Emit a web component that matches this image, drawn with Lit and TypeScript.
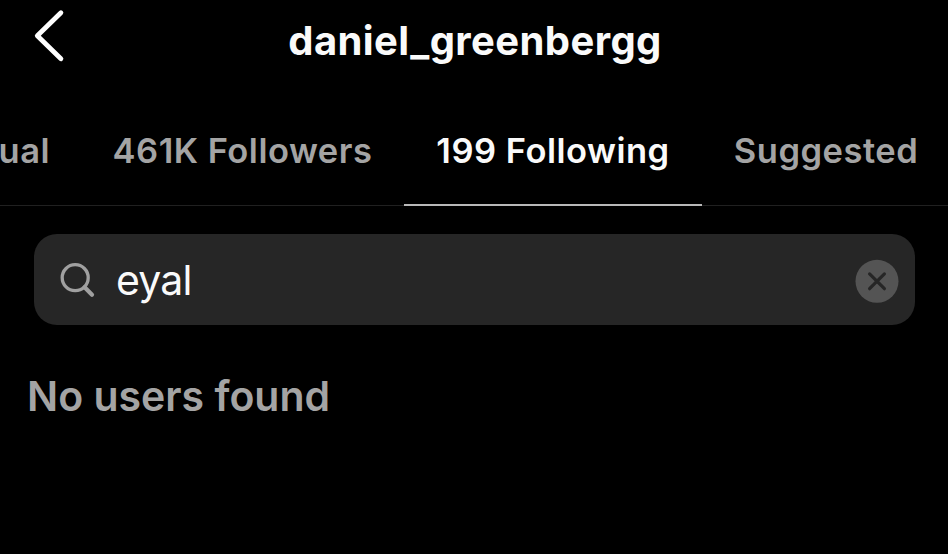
import { LitElement, html, css } from 'lit';
import { customElement, property, state } from 'lit/decorators.js';
import { classMap } from 'lit/directives/class-map.js';

interface Tab {
  id: string;
  label: string;
}

@customElement('app-root')
export class AppRoot extends LitElement {
  static styles = css`
    :host {
      display: block;
      width: 948px;
      height: 554px;
      overflow: hidden;
      background-color: #000;
      color: #fafafa;
      font-family: Inter, 'Liberation Sans', sans-serif;
    }

    * {
      box-sizing: border-box;
    }

    button {
      padding: 0;
      border: none;
      background-color: transparent;
      color: inherit;
      font: inherit;
      cursor: pointer;
    }

    svg {
      display: block;
    }

    .header {
      display: grid;
      grid-template-columns: 100px 1fr 98px;
      align-items: start;
      height: 84px;
    }

    .back {
      width: 32px;
      margin: 9px 0 0 33px;
    }

    h1 {
      margin: 16px 0 0;
      font-size: 40px;
      line-height: 50px;
      font-weight: 700;
      letter-spacing: 0.4px;
      text-align: center;
      white-space: nowrap;
    }

    .tabs {
      display: grid;
      grid-template-columns: 81px 323px 298px 248px;
      height: 122px;
      box-shadow: inset 0 -1px #202020;
    }

    .tab {
      display: flex;
      justify-content: center;
      padding-top: 46px;
      border-bottom: 2px solid transparent;
      font-size: 34.5px;
      line-height: 42px;
      font-weight: 600;
      letter-spacing: 0.5px;
      white-space: nowrap;
      color: #a4a4a4;
    }

    .tab:first-child {
      justify-content: flex-end;
      padding-right: 31px;
    }

    .tab.active {
      border-bottom-color: #b8b8b8;
      color: #fafafa;
    }

    .search {
      display: flex;
      align-items: center;
      width: 881px;
      height: 91px;
      margin: 28px 0 0 34px;
      padding: 0 16px 0 25px;
      border-radius: 23px;
      background-color: #262626;
    }

    .query {
      flex: 1;
      padding: 1px 0 0 21px;
      font-size: 41px;
      line-height: 50px;
      letter-spacing: -0.8px;
    }

    .empty {
      margin: 46px 0 0 27px;
      font-size: 41px;
      line-height: 50px;
      font-weight: 600;
      color: #a4a4a4;
    }
  `;

  @property({ type: String })
  username = 'daniel_greenbergg';

  @state()
  query = 'eyal';

  @state()
  selected = 'following';

  tabs: Tab[] = [
    { id: 'mutual', label: 'ual' },
    { id: 'followers', label: '461K Followers' },
    { id: 'following', label: '199 Following' },
    { id: 'suggested', label: 'Suggested' },
  ];

  render() {
    return html`
      <div class="header">
        <button class="back" aria-label="Back">
          <svg width="32" height="54" viewBox="0 0 32 54">
            <path
              d="M27.9 3.7 L4.3 26.7 L27.9 49.8"
              fill="none"
              stroke="#fff"
              stroke-width="4.8"
              stroke-linecap="round"
              stroke-linejoin="round"
            />
          </svg>
        </button>
        <h1>${this.username}</h1>
      </div>
      <div class="tabs">
        ${this.tabs.map(
          (tab) => html`
            <button
              class="tab ${classMap({ active: tab.id === this.selected })}"
              @click="${() => {
                this.selected = tab.id;
              }}"
            >
              ${tab.label}
            </button>
          `
        )}
      </div>
      <div class="search">
        <svg width="36" height="38" viewBox="0 0 36 38" fill="none" stroke="#a0a0a0">
          <circle cx="16.2" cy="16.7" r="13" stroke-width="3.3" />
          <path d="M25.6 26.2 L33 33.8" stroke-width="4.2" stroke-linecap="round" />
        </svg>
        <span class="query">${this.query}</span>
        <button
          aria-label="Clear"
          @click="${() => {
            this.query = '';
          }}"
        >
          <svg width="44" height="46" viewBox="0 0 44 46">
            <circle cx="22" cy="24.3" r="21.5" fill="#545454" />
            <path
              d="M14.6 16.9 L29.4 31.7 M29.4 16.9 L14.6 31.7"
              stroke="#262626"
              stroke-width="3.2"
              stroke-linecap="round"
            />
          </svg>
        </button>
      </div>
      <div class="empty">No users found</div>
    `;
  }
}
